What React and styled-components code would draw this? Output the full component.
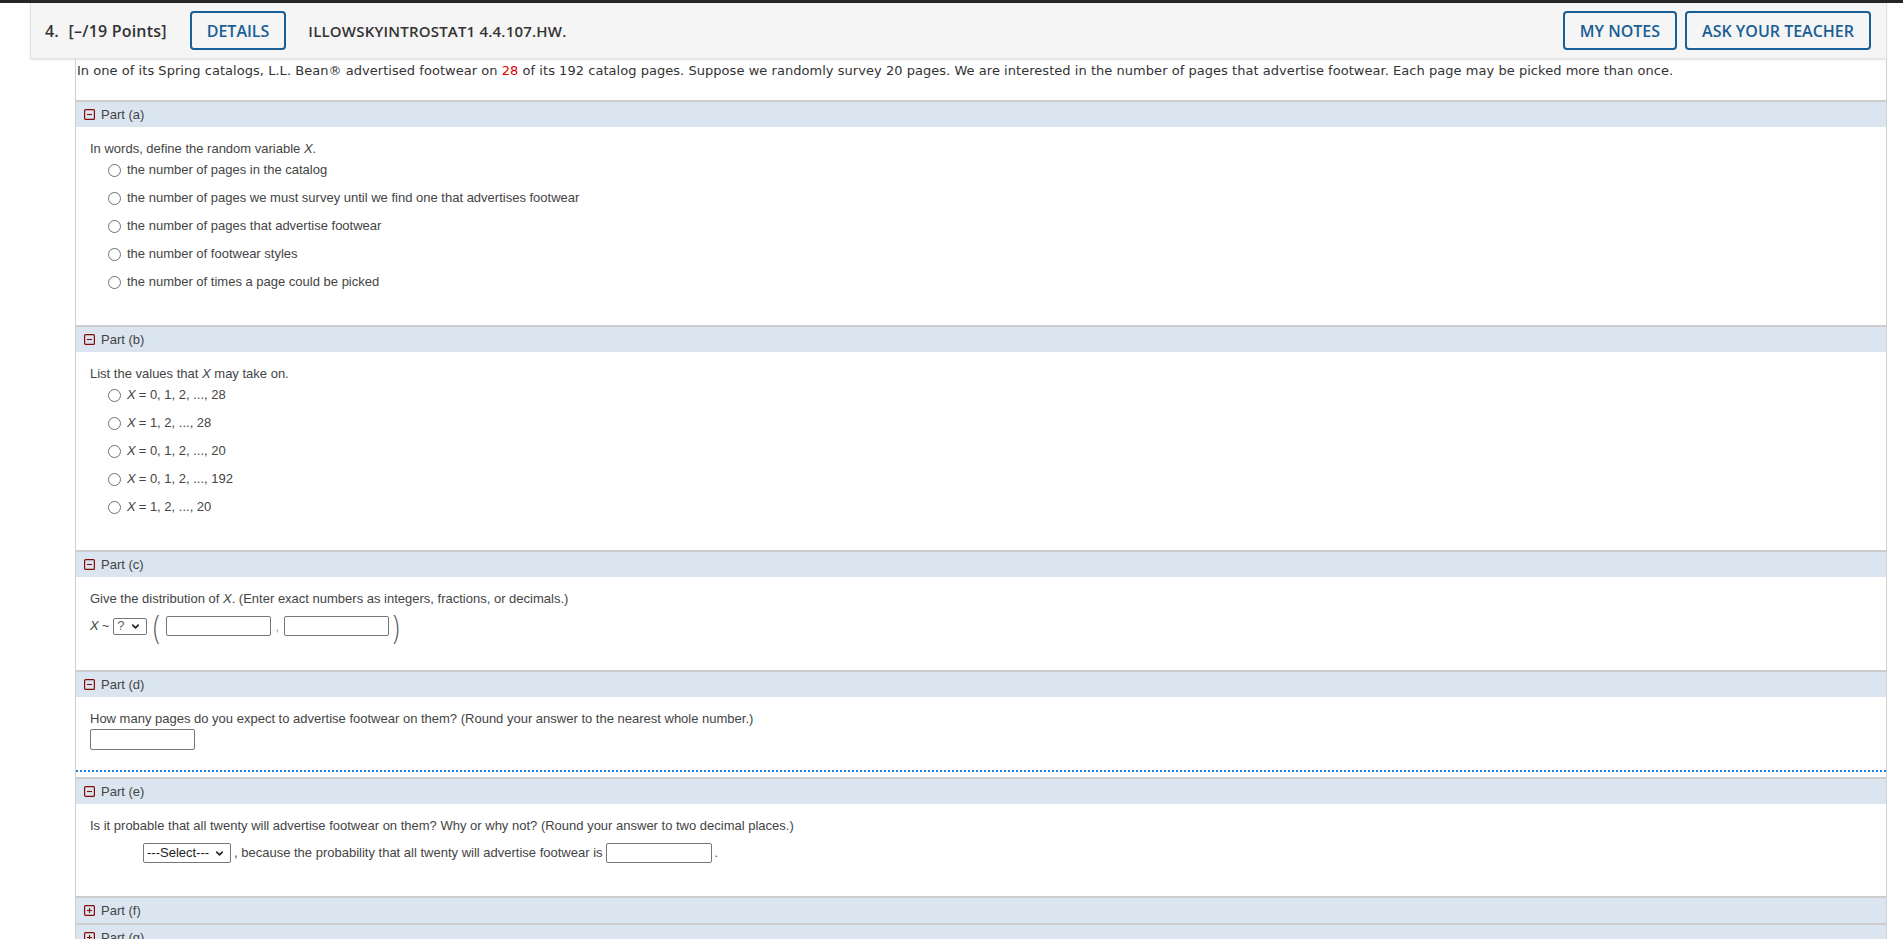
import styled, { createGlobalStyle } from "styled-components";
import { ChevronDown } from "lucide-react";

const GlobalStyle = createGlobalStyle`
    html, body {
        margin: 0;
        padding: 0;
        background: #fff;
    }
    body {
        font-family: "Liberation Sans", Arial, sans-serif;
    }
`;

const Page = styled.div`
    border-top: 3px solid #262626;
    min-height: 936px;
`;

const Question = styled.div`
    margin-left: 30px;
    width: 1857px;
`;

const Header = styled.div`
    height: 56px;
    box-sizing: border-box;
    display: flex;
    align-items: center;
    padding: 0 15px 0 14px;
    background: #f5f5f5;
    border: 1px solid #e2e2e2;
    border-top: none;
    box-shadow: 0 1px 2px rgba(0, 0, 0, 0.1);
    font-family: "Open Sans", sans-serif;
    font-weight: 600;
    font-size: 16px;
    color: #333;
`;

const Number = styled.span`
    margin-right: 10px;
`;

const Points = styled.span`
    letter-spacing: 0.2px;
`;

const Title = styled.span`
    margin-left: 22px;
    font-size: 15px;
    letter-spacing: 0.2px;
`;

const HeaderButton = styled.button`
    height: 39px;
    box-sizing: border-box;
    padding: 0 15px;
    margin-left: ${(p) => p.$offset || 0}px;
    background: transparent;
    border: 2px solid #1a5e96;
    border-radius: 4px;
    color: #1a5e96;
    font-family: "Open Sans", sans-serif;
    font-weight: 600;
    font-size: 16px;
    cursor: pointer;
`;

const RightGroup = styled.div`
    margin-left: auto;
    display: flex;
    gap: 8px;
`;

const Body = styled.div`
    margin-left: 45px;
    border-left: 1px solid #cfcfcf;
    border-right: 1px solid #cfcfcf;
`;

const Intro = styled.div`
    height: 41px;
    box-sizing: border-box;
    padding: 4px 0 0 1px;
    font-family: "DejaVu Sans", Verdana, sans-serif;
    font-size: 13px;
    line-height: 16px;
    letter-spacing: 0.04px;
    color: #333;
`;

const Red = styled.span`
    color: #e00000;
`;

const PartBar = styled.div`
    height: 27px;
    box-sizing: border-box;
    border-top: 2px solid #cdcdcd;
    background: #dae5ef;
    display: flex;
    align-items: center;
    gap: 6px;
    padding-left: 8px;
    font-size: 13px;
    color: #444;
`;

const PartBody = styled.div`
    padding: 14px 14px ${(p) => p.$bottom}px 14px;
    font-size: 13px;
    line-height: 16px;
    color: #444;
    ${(p) =>
        p.$focused &&
        `
        border-bottom: 2px dotted #1a7fe0;
        margin-bottom: 5px;
    `}
`;

const Prompt = styled.div``;

const Option = styled.label`
    display: flex;
    align-items: center;
    gap: 6px;
    height: 16px;
    margin: ${(p) => (p.$first ? 5 : 12)}px 0 0 18px;
`;

const Radio = styled.span`
    width: 11px;
    height: 11px;
    border: 1px solid #707070;
    border-radius: 50%;
    background: #fff;
    flex: none;
`;

const Var = styled.i`
    margin-right: 3px;
`;

const AnswerRow = styled.div`
    display: flex;
    align-items: center;
    height: ${(p) => p.$height}px;
    margin-top: ${(p) => p.$top}px;
    margin-left: ${(p) => p.$indent || 0}px;
`;

const Tilde = styled.span`
    margin: 0 4px 0 3px;
`;

const SelectBox = styled.div`
    height: ${(p) => p.$height}px;
    width: ${(p) => p.$width}px;
    box-sizing: border-box;
    border: 1px solid #767676;
    border-radius: 2px;
    display: flex;
    align-items: center;
    justify-content: space-between;
    padding: 0 5px 0 3px;
    background: #fff;
    color: ${(p) => p.$color};
    font-size: 13px;
`;

const Paren = styled.span`
    font-family: "Open Sans", sans-serif;
    font-weight: 300;
    font-size: 24px;
    line-height: 30px;
    color: #555;
    transform: scaleY(1.4);
    margin: ${(p) => p.$margin};
`;

const TextInput = styled.input`
    width: ${(p) => p.$width}px;
    height: ${(p) => p.$height}px;
    box-sizing: border-box;
    border: 1px solid #767676;
    border-radius: 2px;
    padding: 1px 3px;
    margin: 0;
    font-size: 13px;
    background: #fff;
    display: block;
`;

const Comma = styled.span`
    width: 13px;
    text-align: center;
    color: #888;
    font-size: 11px;
    align-self: flex-end;
    margin-bottom: 6px;
`;

const Gap = styled.span`
    margin: 0 3px 0 3px;
`;

function PartIcon({ open }) {
    return (
        <svg width="11" height="11" viewBox="0 0 11 11">
            <rect x="0.6" y="0.6" width="9.8" height="9.8" rx="1" fill="none" stroke="#850a0a" strokeWidth="1.2" />
            <line x1="3" y1="5.5" x2="8" y2="5.5" stroke="#850a0a" strokeWidth="1.1" />
            {!open && <line x1="5.5" y1="3" x2="5.5" y2="8" stroke="#850a0a" strokeWidth="1.1" />}
        </svg>
    );
}

function Part({ label, open = true }) {
    return (
        <PartBar>
            <PartIcon open={open} />
            <span>Part ({label})</span>
        </PartBar>
    );
}

const partA = [
    "the number of pages in the catalog",
    "the number of pages we must survey until we find one that advertises footwear",
    "the number of pages that advertise footwear",
    "the number of footwear styles",
    "the number of times a page could be picked",
];

const partB = ["0, 1, 2, ..., 28", "1, 2, ..., 28", "0, 1, 2, ..., 20", "0, 1, 2, ..., 192", "1, 2, ..., 20"];

export default function App() {
    return (
        <Page>
            <GlobalStyle />
            <Question>
                <Header>
                    <Number>4.</Number>
                    <Points>[–/19 Points]</Points>
                    <HeaderButton $offset={23}>DETAILS</HeaderButton>
                    <Title>ILLOWSKYINTROSTAT1 4.4.107.HW.</Title>
                    <RightGroup>
                        <HeaderButton>MY NOTES</HeaderButton>
                        <HeaderButton>ASK YOUR TEACHER</HeaderButton>
                    </RightGroup>
                </Header>
                <Body>
                    <Intro>
                        In one of its Spring catalogs, L.L. Bean® advertised footwear on <Red>28</Red> of its 192 catalog
                        pages. Suppose we randomly survey 20 pages. We are interested in the number of pages that
                        advertise footwear. Each page may be picked more than once.
                    </Intro>

                    <Part label="a" />
                    <PartBody $bottom={35}>
                        <Prompt>
                            In words, define the random variable <i>X</i>.
                        </Prompt>
                        {partA.map((text, i) => (
                            <Option key={text} $first={i === 0}>
                                <Radio />
                                {text}
                            </Option>
                        ))}
                    </PartBody>

                    <Part label="b" />
                    <PartBody $bottom={35}>
                        <Prompt>
                            List the values that <i>X</i> may take on.
                        </Prompt>
                        {partB.map((text, i) => (
                            <Option key={text} $first={i === 0}>
                                <Radio />
                                <span>
                                    <Var>X</Var>= {text}
                                </span>
                            </Option>
                        ))}
                    </PartBody>

                    <Part label="c" />
                    <PartBody $bottom={29}>
                        <Prompt>
                            Give the distribution of <i>X</i>. (Enter exact numbers as integers, fractions, or decimals.)
                        </Prompt>
                        <AnswerRow $height={30} $top={4}>
                            <i>X</i>
                            <Tilde>~</Tilde>
                            <SelectBox $width={34} $height={17} $color="#666">
                                ?
                                <ChevronDown size={11} strokeWidth={3.5} color="#222" />
                            </SelectBox>
                            <Paren $margin="0 6px 0 6px">(</Paren>
                            <TextInput $width={105} $height={20} />
                            <Comma>,</Comma>
                            <TextInput $width={105} $height={20} />
                            <Paren $margin="0 0 0 4px">)</Paren>
                        </AnswerRow>
                    </PartBody>

                    <Part label="d" />
                    <PartBody $bottom={20} $focused>
                        <Prompt>
                            How many pages do you expect to advertise footwear on them? (Round your answer to the nearest
                            whole number.)
                        </Prompt>
                        <AnswerRow $height={21} $top={2}>
                            <TextInput $width={105} $height={21} />
                        </AnswerRow>
                    </PartBody>

                    <Part label="e" />
                    <PartBody $bottom={33}>
                        <Prompt>
                            Is it probable that all twenty will advertise footwear on them? Why or why not? (Round your
                            answer to two decimal places.)
                        </Prompt>
                        <AnswerRow $height={20} $top={9} $indent={53}>
                            <SelectBox $width={88} $height={20} $color="#222">
                                ---Select---
                                <ChevronDown size={11} strokeWidth={3.5} color="#222" />
                            </SelectBox>
                            <Gap>, because the probability that all twenty will advertise footwear is</Gap>
                            <TextInput $width={106} $height={20} />
                            <Gap>.</Gap>
                        </AnswerRow>
                    </PartBody>

                    <Part label="f" open={false} />
                    <Part label="g" open={false} />
                </Body>
            </Question>
        </Page>
    );
}
